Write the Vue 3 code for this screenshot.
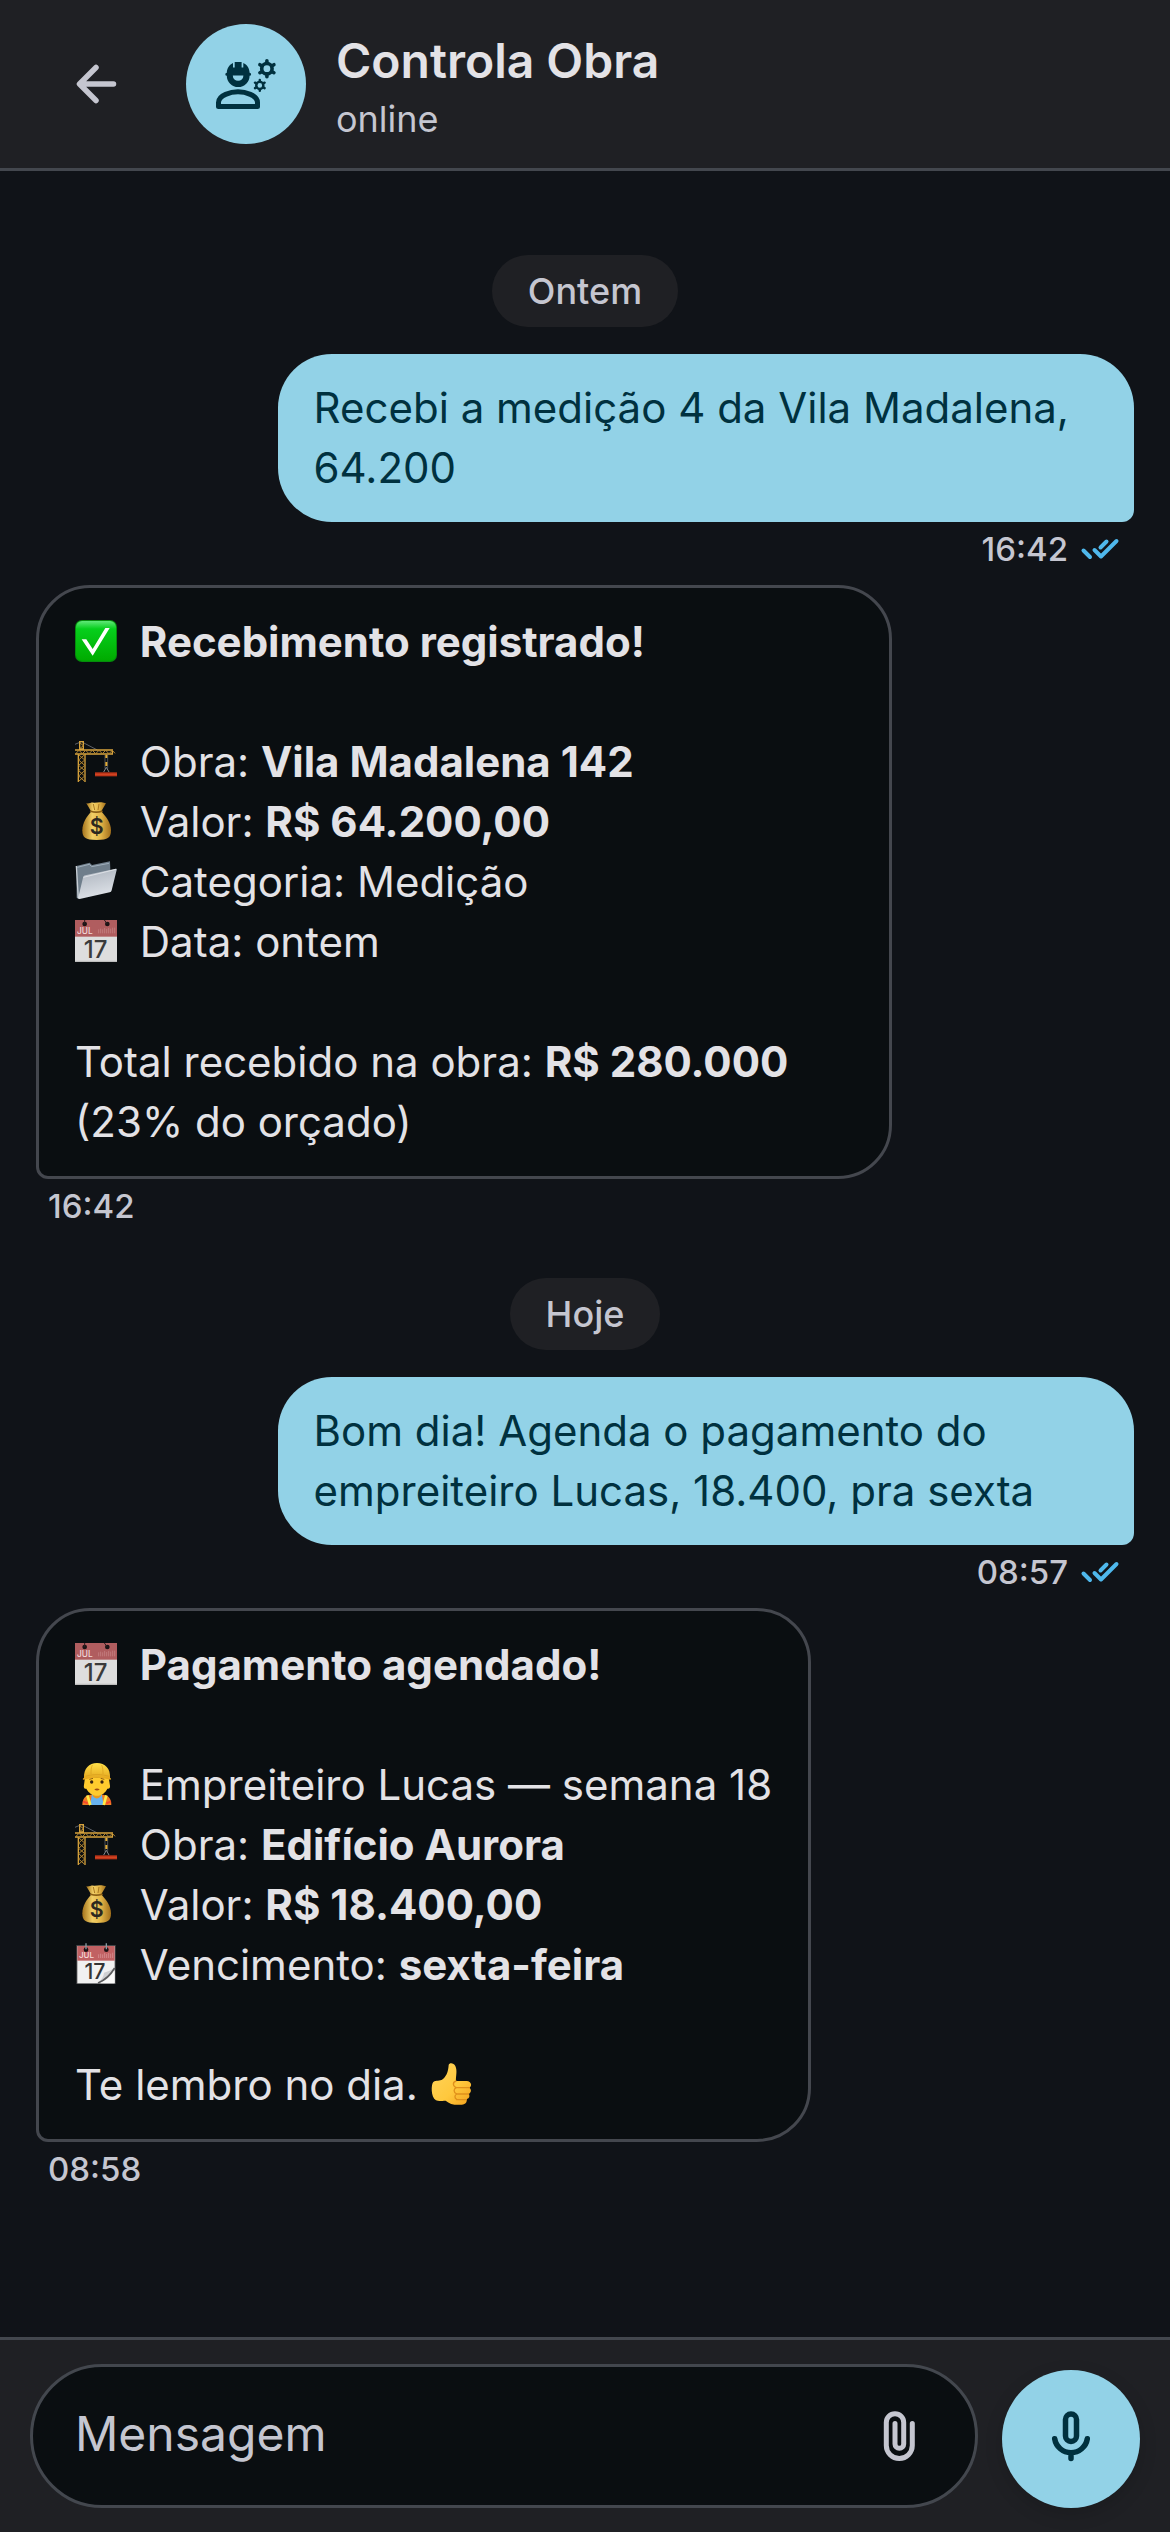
<template>
  <div class="chat-page">
    <!-- gradients shared by the emoji drawings -->
    <svg class="gradients" width="0" height="0" aria-hidden="true">
      <defs>
        <linearGradient id="green" x1="0" y1="0" x2="0" y2="1">
          <stop offset="0" stop-color="#5fe878" />
          <stop offset="0.2" stop-color="#06cf1c" />
          <stop offset="1" stop-color="#00ab00" />
        </linearGradient>
        <linearGradient id="gold" x1="0" y1="0" x2="1" y2="0">
          <stop offset="0" stop-color="#a5741d" />
          <stop offset="0.35" stop-color="#f2cf66" />
          <stop offset="0.65" stop-color="#e3b548" />
          <stop offset="1" stop-color="#a06e1b" />
        </linearGradient>
        <linearGradient id="steel" x1="0" y1="0" x2="0.3" y2="1">
          <stop offset="0" stop-color="#a9b1bb" />
          <stop offset="1" stop-color="#dde1e7" />
        </linearGradient>
        <linearGradient id="helmet" x1="0" y1="0" x2="0" y2="1">
          <stop offset="0" stop-color="#ffe04a" />
          <stop offset="1" stop-color="#e3a31b" />
        </linearGradient>
        <linearGradient id="hand" x1="0" y1="0" x2="1" y2="1">
          <stop offset="0" stop-color="#ffd45c" />
          <stop offset="0.6" stop-color="#ffc83d" />
          <stop offset="1" stop-color="#f3a01c" />
        </linearGradient>
      </defs>
    </svg>

    <header class="topbar">
      <button class="icon-button back" type="button" aria-label="Voltar">
        <svg class="icon" viewBox="0 0 72 72" aria-hidden="true">
          <path d="M53.500 36H20M36 19.500 19.500 36 36 52.500" fill="none" stroke="currentColor" stroke-width="5.500" stroke-linecap="round" stroke-linejoin="round" />
        </svg>
      </button>
      <div class="avatar">
        <svg class="icon" viewBox="0 0 72 72" aria-hidden="true">
          <path d="M8.500 58.500V54.500C8.500 47 21 43.800 28 43.800S47.500 47 47.500 54.500V58.500Z" fill="none" stroke="#00313f" stroke-width="5" stroke-linejoin="round" />
          <path d="M16.800 24.700C17 20 19.500 16.700 23 15V19.500H24.700V14H31.600V19.500H33.300V15C37 16.700 39.400 20 39.600 24.700A1.500 1.500 0 0 1 39.600 27.700 11.400 11.400 0 0 1 16.800 27.700 1.500 1.500 0 0 1 16.800 24.700Z" fill="#00313f" />
          <path d="M22.800 27.500H33.400A5.300 5.300 0 0 1 22.800 27.500Z" fill="#92d2e7" />
          <g v-for="gear in gears" :key="gear.at" :transform="gear.at" fill="none" stroke="#00313f">
            <circle r="5.200" stroke-width="3.600" />
            <path d="M0-6V-8M0 6V8M5.200-3 7-4M5.200 3 7 4M-5.200-3-7-4M-5.200 3-7 4" stroke-width="3.600" stroke-linecap="round" />
          </g>
        </svg>
      </div>
      <div class="contact">
        <h1>Controla Obra</h1>
        <p>online</p>
      </div>
    </header>

    <main class="messages">
      <section v-for="day in days" :key="day.label" class="day">
        <h2 class="chip">{{ day.label }}</h2>
        <article v-for="msg in day.messages" :key="msg.id" class="message" :class="{ sent: msg.sent }">
          <div class="bubble">
            <p v-for="(line, i) in msg.lines" :key="i" class="line">
              <svg v-if="line.icon" class="emoji lead" viewBox="0 0 126 126" aria-hidden="true">
                <g v-if="line.icon === 'check'">
                  <rect width="126" height="126" rx="21" fill="#058c0c" />
                  <rect x="3" y="3" width="120" height="119" rx="18" fill="url(#green)" />
                  <path d="M20 58h14l19 29 38-63h13L53 107Z" fill="#fff" />
                </g>
                <g v-else-if="line.icon === 'crane'" fill="none">
                  <path d="M0 13 19 5 67 30" stroke="#5d6066" stroke-width="3" />
                  <path d="M14 5h11v22h-11zM0 30h112v12H0M10 42v84M30 42v84" stroke="#d6a23c" stroke-width="4" />
                  <path d="M14 8l11 9-11 9M2 41l10-10 10 10 10-10 10 10 10-10 10 10 10-10 10 10 10-10 10 10 10-10 8 9M11 44l18 16-18 16 18 16-18 16 18 16M29 44l-18 16 18 16-18 16 18 16-18 16" stroke="#b58731" stroke-width="3" />
                  <path d="M90 44v42M98 44v42" stroke="#6f737a" stroke-width="2" />
                  <path d="M94 44v10M94 66v12" stroke="#e2ab35" stroke-width="6" />
                  <path d="M94 82l-8 14M94 82l8 14" stroke="#85898e" stroke-width="3" />
                  <rect x="60" y="97" width="66" height="12" fill="#bd3519" />
                  <path d="M60 103h66" stroke="#e0502c" stroke-width="2" />
                </g>
                <g v-else-if="line.icon === 'money'">
                  <path d="M34 10c10 1 14-3 22-2s15-3 24-1l13 3-15 25H49Z" fill="url(#gold)" />
                  <path d="M48 35h32c13 15 28 33 28 56 0 22-8 29-43 29S22 113 22 91c0-23 13-41 26-56Z" fill="url(#gold)" />
                  <path d="M47 34c12 4 22 4 34 0" fill="none" stroke="#8a5d14" stroke-width="5" stroke-linecap="round" />
                  <path d="M55 12l4 18M72 12l-3 18" stroke="#a97822" stroke-width="3" />
                  <text x="65" y="103" text-anchor="middle" font-size="64" font-weight="600" fill="#2b2720">$</text>
                </g>
                <g v-else-if="line.icon === 'folder'">
                  <path d="M4 18l40-10 7 7 54-11 3 82-98 30-5-3Z" fill="#6f7e8b" />
                  <path d="M7 22l36-9 7 7 52-10" fill="none" stroke="#9faebb" stroke-width="3" />
                  <path d="M4 18l6 97" stroke="#c6cdd4" stroke-width="4" />
                  <path d="M24 53c1-4 3-6 7-7l91-20c3 0 4 1 3 4l-15 61c-1 4-3 5-6 6l-90 20c-4 0-5-1-4-5Z" fill="url(#steel)" />
                  <path d="M25 52l98-24" stroke="#eef1f5" stroke-width="2" />
                </g>
                <g v-else-if="line.icon === 'calendar'">
                  <rect width="126" height="126" fill="#dedede" />
                  <rect width="126" height="50" fill="#b05d5f" />
                  <path d="M0 124h126" stroke="#bdbdbd" stroke-width="4" />
                  <circle cx="29" cy="12" r="7" fill="#1b1214" />
                  <circle cx="97" cy="12" r="7" fill="#1b1214" />
                  <path d="M29 12V0M97 12l-9-12" stroke="#2d1e20" stroke-width="3" />
                  <path d="M71 40V28M77 40V26M83 40V28M89 40V24M95 40V27M101 40V24M107 40V26M113 40V23M119 40V23" stroke="#c98a8b" stroke-width="2" />
                  <text x="6" y="41" font-size="25" font-weight="500" fill="#f0d9d9">JUL</text>
                  <text x="62" y="113" text-anchor="middle" font-size="72" font-weight="500" fill="#3b3b3b">17</text>
                </g>
                <g v-else-if="line.icon === 'tearoff'">
                  <rect x="4" y="6" width="118" height="117" fill="#434548" />
                  <rect x="7" y="9" width="112" height="112" fill="#f1f1f1" />
                  <rect x="7" y="9" width="112" height="44" fill="#c16163" />
                  <circle cx="33" cy="20" r="7" fill="#1b1214" />
                  <circle cx="94" cy="20" r="7" fill="#1b1214" />
                  <path d="M33 19V1M94 19V1" stroke="#8a9aa3" stroke-width="4" />
                  <path d="M71 45V34M77 45V32M83 45V34M89 45V30M95 45V33M101 45V30M107 45V32M113 45V29" stroke="#dd9c9d" stroke-width="2" />
                  <text x="12" y="46" font-size="24" font-weight="500" fill="#f6dddd">JUL</text>
                  <text x="60" y="109" text-anchor="middle" font-size="64" font-weight="500" fill="#343434">17</text>
                  <path d="M119 73c-9 10-21 12-32 16-1 12-8 22-18 31 24-8 39-23 50-47Z" fill="#cfd0d2" />
                  <path d="M119 75C105 99 91 111 69 120" fill="none" stroke="#5a5b5d" stroke-width="5" />
                  <path d="M119 82v39H76c20-9 32-21 43-39Z" fill="#fafafa" />
                </g>
                <g v-else>
                  <path d="M22 126c0-17 7-29 25-31h38c17 2 24 14 24 31Z" fill="#ef7d24" />
                  <path d="M51 94h29l6 32H45Z" fill="#67b2ee" />
                  <path d="M37 97l9 29M94 97l-8 29" stroke="#ffec48" stroke-width="8" />
                  <path d="M24 115l14 6M108 115l-14 6" stroke="#f5482d" stroke-width="6" />
                  <path d="M53 82h25v17c-8 10-17 10-25 0Z" fill="#e99a1e" />
                  <path d="M30 43h71l4 25c1 10-5 10-8 9-6 13-18 21-31 21S41 90 34 77c-5 1-9-2-7-11Z" fill="#ffcb2e" />
                  <circle cx="50" cy="57" r="5" fill="#3b2412" />
                  <circle cx="81" cy="57" r="5" fill="#3b2412" />
                  <path d="M43 49l11-3M77 46l11 3" stroke="#8b5913" stroke-width="3" />
                  <path d="M58 79c5-3 11-3 16 0-5 5-11 5-16 0Z" fill="#9c4a13" />
                  <path d="M27 44C26 17 42 0 66 0s41 17 39 44c5 3 4 6 0 6-22-8-55-8-79 0-4 0-4-3 1-6Z" fill="url(#helmet)" />
                  <path d="M31 40c22-7 49-7 71 0M52 6c-4 9-4 18-4 27M80 6c4 9 4 18 4 27" fill="none" stroke="#d69b1b" stroke-width="2" />
                </g>
              </svg>
              {{ line.text }} <strong v-if="line.bold">{{ line.bold }}</strong> {{ line.after }}
              <svg v-if="line.thumb" class="emoji" viewBox="0 0 126 126" aria-hidden="true">
                <path d="M56 6C58-2 71-1 76 9c7 15 1 31 2 45h32c15 1 17 16 8 20 8 6 5 16-2 18 5 7 1 15-6 16 2 11-6 17-14 17-23 2-37-2-49-12-12 0-20 3-29-1C2 103 3 63 10 57c9-6 19-1 28-8 13-11 17-26 18-43Z" fill="url(#hand)" />
                <path d="M78 54c-11 4-10 16 1 20-9 4-9 15 1 19-7 4-7 13 1 17M80 74h38M80 93h36M80 110h29" fill="none" stroke="#e0901b" stroke-width="4" stroke-linecap="round" />
              </svg>
            </p>
          </div>
          <div class="meta">
            <time>{{ msg.time }}</time>
            <svg v-if="msg.sent" class="ticks" viewBox="0 0 45 45" role="img" aria-label="Lida">
              <path d="M6.500 23.500 13 30M17.500 23 24 29.500 39.500 14M23.500 20.500 29.500 14.500" />
            </svg>
          </div>
        </article>
      </section>
    </main>

    <form class="composer" @submit.prevent>
      <div class="field">
        <input v-model="draft" type="text" placeholder="Mensagem" aria-label="Mensagem" />
        <button class="icon-button" type="button" aria-label="Anexar arquivo">
          <svg class="icon" viewBox="0 0 72 72" aria-hidden="true">
            <path d="M49.300 23.500V45.500A13 13 0 0 1 23.300 45.500V22.400A8.700 8.700 0 0 1 40.700 22.400V44A4.350 4.350 0 0 1 32 44V23.500" fill="none" stroke="currentColor" stroke-width="5" stroke-linecap="round" />
          </svg>
        </button>
      </div>
      <button class="mic" type="button" aria-label="Gravar áudio">
        <svg class="icon" viewBox="0 0 72 72" aria-hidden="true">
          <g fill="none" stroke="currentColor" stroke-width="5.500" stroke-linecap="round">
            <rect x="30.500" y="11" width="11" height="27.500" rx="5.500" />
            <path d="M19.700 35.800A16.500 16.500 0 0 0 52.300 35.800M36 50V55.500" />
          </g>
        </svg>
      </button>
    </form>
  </div>
</template>

<script setup>
import { ref } from "vue";

const draft = ref("");

const gears = [
  { at: "translate(56.9 20.7)" },
  { at: "translate(49.8 37.4) scale(0.68)" },
];

const days = [
  {
    label: "Ontem",
    messages: [
      {
        id: 1,
        sent: true,
        time: "16:42",
        lines: [{ text: "Recebi a medição 4 da Vila Madalena, 64.200" }],
      },
      {
        id: 2,
        time: "16:42",
        lines: [
          { icon: "check", bold: "Recebimento registrado!" },
          {},
          { icon: "crane", text: "Obra:", bold: "Vila Madalena 142" },
          { icon: "money", text: "Valor:", bold: "R$ 64.200,00" },
          { icon: "folder", text: "Categoria: Medição" },
          { icon: "calendar", text: "Data: ontem" },
          {},
          { text: "Total recebido na obra:", bold: "R$ 280.000", after: "(23% do orçado)" },
        ],
      },
    ],
  },
  {
    label: "Hoje",
    messages: [
      {
        id: 3,
        sent: true,
        time: "08:57",
        lines: [{ text: "Bom dia! Agenda o pagamento do empreiteiro Lucas, 18.400, pra sexta" }],
      },
      {
        id: 4,
        time: "08:58",
        lines: [
          { icon: "calendar", bold: "Pagamento agendado!" },
          {},
          { icon: "worker", text: "Empreiteiro Lucas — semana 18" },
          { icon: "crane", text: "Obra:", bold: "Edifício Aurora" },
          { icon: "money", text: "Valor:", bold: "R$ 18.400,00" },
          { icon: "tearoff", text: "Vencimento:", bold: "sexta-feira" },
          {},
          { text: "Te lembro no dia.", thumb: true },
        ],
      },
    ],
  },
];
</script>

<style>
body {
  background: #101318;
}
</style>

<style scoped>
.chat-page {
  display: flex;
  flex-direction: column;
  min-height: 100vh;
  background: #101318;
  color: #e3e2e6;
  font-family: Inter, "Noto Sans", sans-serif;
  font-size: 42px;
  line-height: 60px;
}

.gradients {
  display: block;
}

h1,
h2,
p {
  margin: 0;
}

button {
  display: flex;
  align-items: center;
  justify-content: center;
  padding: 0;
  border: 0;
  cursor: pointer;
}

.icon {
  display: block;
  width: 72px;
  height: 72px;
}

/* header */
.topbar {
  display: flex;
  align-items: center;
  padding: 24px;
  background: #1f2024;
  border-bottom: 3px solid #43474e;
}

.icon-button {
  background: transparent;
  color: #c5c6d0;
}

.back {
  width: 144px;
  height: 120px;
}

.avatar {
  display: flex;
  align-items: center;
  justify-content: center;
  width: 120px;
  height: 120px;
  margin: 0 30px 0 18px;
  border-radius: 50%;
  background: #92d2e7;
}

.contact h1 {
  font-size: 48px;
  font-weight: 600;
  line-height: 70px;
}

.contact p {
  color: #c5c6d0;
  font-size: 36px;
  line-height: 46px;
}

/* conversation */
.messages {
  flex: 1;
  padding: 48px 36px;
}

.day {
  display: flex;
  flex-direction: column;
}

.chip {
  align-self: center;
  margin: 36px 0 27px;
  padding: 12px 36px;
  border-radius: 36px;
  background: #1f2024;
  color: #c5c6d0;
  font-size: 36px;
  font-weight: 500;
  line-height: 48px;
}

.message {
  display: flex;
  flex-direction: column;
  align-items: flex-start;
  margin-bottom: 15px;
}

.bubble {
  box-sizing: border-box;
  max-width: 78%;
  padding: 24px 36px;
  border: 3px solid #44474e;
  border-radius: 54px 54px 54px 12px;
  background: #0a0e11;
}

.line {
  min-height: 60px;
}

.line strong {
  font-weight: 700;
}

.emoji {
  width: 42px;
  height: 42px;
  overflow: visible;
  vertical-align: -5px;
}

.lead {
  margin-right: 11px;
}

.sent {
  align-items: flex-end;
}

.sent .bubble {
  border: 0;
  border-radius: 54px 54px 12px 54px;
  background: #92d2e7;
  color: #00313f;
}

.meta {
  display: flex;
  align-items: center;
  gap: 9px;
  height: 42px;
  margin-top: 6px;
  padding: 0 12px;
  color: #c5c6d0;
  font-size: 33px;
  font-weight: 500;
  line-height: 42px;
}

.ticks {
  width: 45px;
  height: 45px;
  fill: none;
  stroke: #4fb8ec;
  stroke-width: 4;
  stroke-linecap: round;
  stroke-linejoin: round;
}

/* message box */
.composer {
  display: flex;
  align-items: flex-end;
  gap: 24px;
  padding: 24px 30px;
  border-top: 3px solid #43474e;
  background: #1f2024;
}

.field {
  display: flex;
  flex: 1;
  align-items: center;
  box-sizing: border-box;
  min-width: 0;
  height: 144px;
  padding: 0 40px 0 42px;
  border: 3px solid #43474e;
  border-radius: 72px;
  background: #0a0e11;
}

.field input {
  flex: 1;
  min-width: 0;
  height: 66px;
  padding: 0 0 6px;
  border: 0;
  outline: none;
  background: transparent;
  color: #e3e2e6;
  font: inherit;
  font-size: 48px;
}

.field input::placeholder {
  color: #c5c6d0;
  opacity: 1;
}

.mic {
  width: 138px;
  height: 138px;
  border-radius: 50%;
  background: #92d2e7;
  box-shadow: 0 6px 18px rgba(0, 0, 0, 0.15);
  color: #00313f;
}
</style>
